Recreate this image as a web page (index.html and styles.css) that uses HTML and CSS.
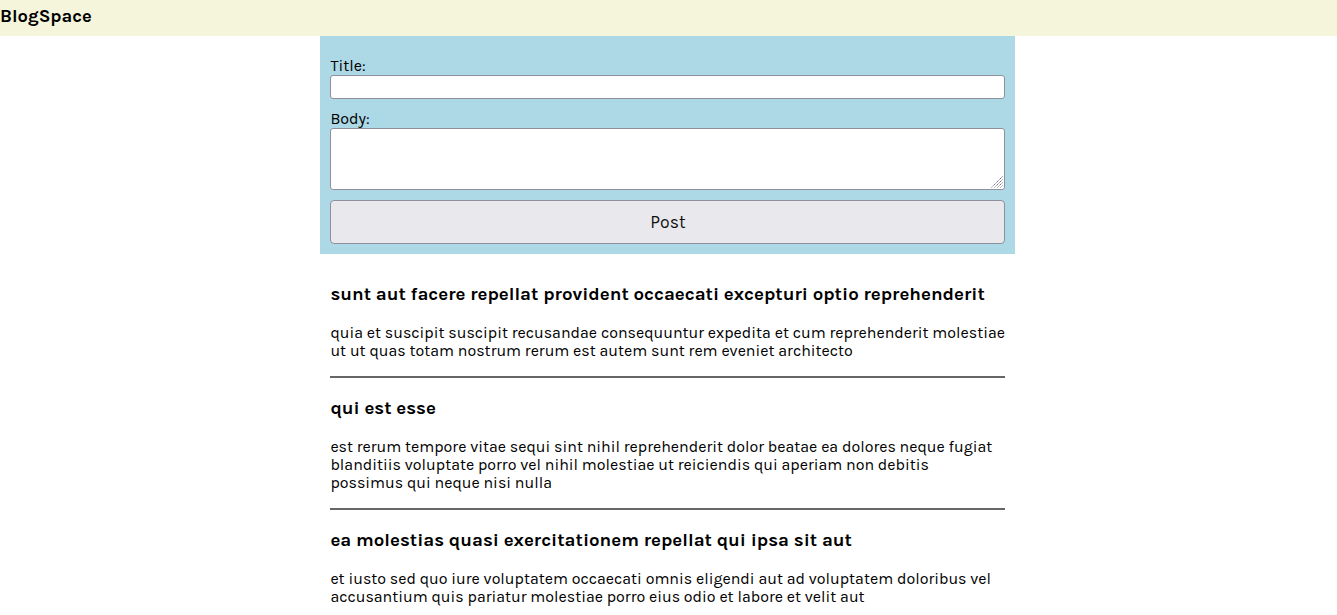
FILE: index.html
```html
<!DOCTYPE html>
<html lang="en">
<head>
<meta charset="utf-8">
<title>BlogSpace</title>
<link rel="stylesheet" href="styles.css">
</head>
<body>
<header class="site-header">BlogSpace</header>
<main class="container">
  <form class="post-form">
    <label class="field-label" for="title">Title:</label>
    <input class="field-input" id="title" type="text">
    <label class="field-label" for="body">Body:</label>
    <div class="textarea-wrap">
      <textarea class="field-textarea" id="body"></textarea>
      <svg class="grip" width="12" height="12" viewBox="0 0 12 12" aria-hidden="true">
        <path d="M11.5 0.5 L0.5 11.5 M11.5 3.5 L3.5 11.5 M11.5 6.5 L6.5 11.5 M11.5 9.5 L9.5 11.5" stroke="#6f6f7d" stroke-width="1" stroke-dasharray="1.4 0.7" fill="none"/>
      </svg>
    </div>
    <button class="post-btn" type="button">Post</button>
  </form>
  <section class="posts">
    <article class="post">
      <h3 class="post-title">sunt aut facere repellat provident occaecati excepturi optio reprehenderit</h3>
      <p class="post-body">quia et suscipit suscipit recusandae consequuntur expedita et cum reprehenderit molestiae ut ut quas totam nostrum rerum est autem sunt rem eveniet architecto</p>
      <hr class="post-rule">
    </article>
    <article class="post">
      <h3 class="post-title">qui est esse</h3>
      <p class="post-body">est rerum tempore vitae sequi sint nihil reprehenderit dolor beatae ea dolores neque fugiat blanditiis voluptate porro vel nihil molestiae ut reiciendis qui aperiam non debitis possimus qui neque nisi nulla</p>
      <hr class="post-rule">
    </article>
    <article class="post">
      <h3 class="post-title">ea molestias quasi exercitationem repellat qui ipsa sit aut</h3>
      <p class="post-body">et iusto sed quo iure voluptatem occaecati omnis eligendi aut ad voluptatem doloribus vel accusantium quis pariatur molestiae porro eius odio et labore et velit aut</p>
      <hr class="post-rule">
    </article>
  </section>
</main>
</body>
</html>
```

FILE: styles.css
```css
* { box-sizing: border-box; }

body {
  margin: 0;
  font-family: "Karla", "Lato", "Liberation Sans", sans-serif;
  font-size: 16px;
  line-height: 18px;
  color: #000;
  background: #fff;
}

.site-header {
  background: #f5f5dc;
  height: 36px;
  padding-top: 5px;
  font-size: 18.4px;
  line-height: 22px;
  font-weight: 700;
}

.container {
  width: 695px;
  margin-left: calc(50% - 348.1px);
}

.post-form {
  background: #add8e6;
  padding: 10px;
  display: flex;
  flex-direction: column;
}

.field-label {
  display: block;
  margin-top: 11px;
  font-size: 16px;
  line-height: 18px;
}

.field-input {
  display: block;
  width: 100%;
  height: 24px;
  border: 1px solid #8f8f9d;
  border-radius: 3px;
  background: #fff;
  font: inherit;
}

.textarea-wrap {
  position: relative;
  margin-bottom: 10px;
}

.field-textarea {
  display: block;
  width: 100%;
  height: 62px;
  border: 1px solid #8f8f9d;
  border-radius: 3px;
  background: #fff;
  resize: none;
  font: inherit;
}

.grip {
  position: absolute;
  right: 2px;
  bottom: 2px;
}

.post-btn {
  display: block;
  width: 100%;
  height: 43.5px;
  padding: 0;
  background: #e9e9ed;
  border: 1px solid #8f8f9d;
  border-radius: 4px;
  font: inherit;
  font-size: 17.6px;
  line-height: 20px;
  color: #111;
}

.posts {
  padding: 11px 10px 10px;
}

.post-title {
  font-size: 18.72px;
  line-height: 24.5px;
  margin: 17.72px 0;
  font-weight: 700;
}

.post-body {
  margin: 16px 0;
  line-height: 18px;
}

.post-rule {
  margin: 8px 0;
  border: none;
  border-top: 2px solid #666;
  height: 0;
}
```
